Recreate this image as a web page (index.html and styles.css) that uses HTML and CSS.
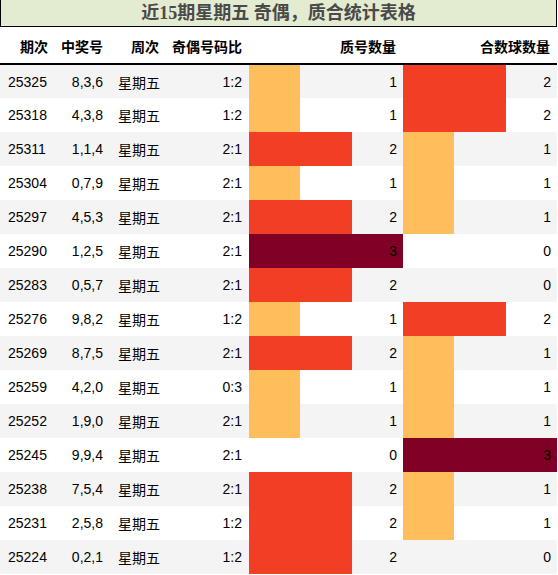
FILE: index.html
```html
<!DOCTYPE html>
<html lang="zh">
<head>
<meta charset="utf-8">
<link rel="stylesheet" href="styles.css">
</head>
<body>
<div class="wrap">
  <div class="title">近15期星期五 奇偶，质合统计表格</div>
  <table class="tbl">
    <colgroup>
      <col class="c1"><col class="c2"><col class="c3"><col class="c4"><col class="c5"><col class="c6">
    </colgroup>
    <thead>
      <tr><th>期次</th><th>中奖号</th><th>周次</th><th>奇偶号码比</th><th>质号数量</th><th>合数球数量</th></tr>
    </thead>
    <tbody>
      <tr><td class="l">25325</td><td>8,3,6</td><td class="l">星期五</td><td>1:2</td><td class="b v1">1</td><td class="b v2">2</td></tr>
      <tr><td class="l">25318</td><td>4,3,8</td><td class="l">星期五</td><td>1:2</td><td class="b v1">1</td><td class="b v2">2</td></tr>
      <tr><td class="l">25311</td><td>1,1,4</td><td class="l">星期五</td><td>2:1</td><td class="b v2">2</td><td class="b v1">1</td></tr>
      <tr><td class="l">25304</td><td>0,7,9</td><td class="l">星期五</td><td>2:1</td><td class="b v1">1</td><td class="b v1">1</td></tr>
      <tr><td class="l">25297</td><td>4,5,3</td><td class="l">星期五</td><td>2:1</td><td class="b v2">2</td><td class="b v1">1</td></tr>
      <tr><td class="l">25290</td><td>1,2,5</td><td class="l">星期五</td><td>2:1</td><td class="b v3">3</td><td class="b v0">0</td></tr>
      <tr><td class="l">25283</td><td>0,5,7</td><td class="l">星期五</td><td>2:1</td><td class="b v2">2</td><td class="b v0">0</td></tr>
      <tr><td class="l">25276</td><td>9,8,2</td><td class="l">星期五</td><td>1:2</td><td class="b v1">1</td><td class="b v2">2</td></tr>
      <tr><td class="l">25269</td><td>8,7,5</td><td class="l">星期五</td><td>2:1</td><td class="b v2">2</td><td class="b v1">1</td></tr>
      <tr><td class="l">25259</td><td>4,2,0</td><td class="l">星期五</td><td>0:3</td><td class="b v1">1</td><td class="b v1">1</td></tr>
      <tr><td class="l">25252</td><td>1,9,0</td><td class="l">星期五</td><td>2:1</td><td class="b v1">1</td><td class="b v1">1</td></tr>
      <tr><td class="l">25245</td><td>9,9,4</td><td class="l">星期五</td><td>2:1</td><td class="b v0">0</td><td class="b v3">3</td></tr>
      <tr><td class="l">25238</td><td>7,5,4</td><td class="l">星期五</td><td>2:1</td><td class="b v2">2</td><td class="b v1">1</td></tr>
      <tr><td class="l">25231</td><td>2,5,8</td><td class="l">星期五</td><td>1:2</td><td class="b v2">2</td><td class="b v1">1</td></tr>
      <tr><td class="l">25224</td><td>0,2,1</td><td class="l">星期五</td><td>1:2</td><td class="b v2">2</td><td class="b v0">0</td></tr>
    </tbody>
  </table>
</div>
</body>
</html>
```

FILE: styles.css
```css
html, body {
  margin: 0;
  padding: 0;
  background: #ffffff;
}
.wrap {
  width: 557px;
}
.title {
  box-sizing: border-box;
  height: 27px;
  background: #e3ebd0;
  border: 1px solid #000;
  border-top: none;
  font-family: "Liberation Serif", "Noto Sans CJK SC", serif;
  font-weight: bold;
  font-size: 18px;
  line-height: 26px;
  color: #4a4a4a;
  text-align: center;
}
.tbl {
  width: 557px;
  border-collapse: collapse;
  table-layout: fixed;
  font-family: "Liberation Sans", "Noto Sans CJK SC", sans-serif;
  font-size: 14px;
  color: #000;
}
.c1 { width: 55px; }
.c2 { width: 55px; }
.c3 { width: 56px; }
.c4 { width: 83px; }
.c5 { width: 154px; }
.c6 { width: 154px; }
.tbl th {
  height: 37px;
  padding: 1px 7px 0 0;
  text-align: right;
  font-weight: bold;
  border-bottom: 2px solid #000;
  box-sizing: border-box;
  white-space: nowrap;
}
.tbl td {
  height: 34px;
  padding: 0 7px 0 8px;
  text-align: right;
  white-space: nowrap;
  box-sizing: border-box;
}
.tbl td.l {
  text-align: left;
}
.tbl tbody tr:nth-child(odd) {
  background: #f4f4f4;
}
.tbl tbody tr:nth-child(even) {
  background: #ffffff;
}
.tbl td.b {
  padding-right: 6px;
}
.tbl td.v1 {
  background: linear-gradient(90deg, #febe5b 33.333%, transparent 33.333%);
}
.tbl td.v2 {
  background: linear-gradient(90deg, #f33e26 66.667%, transparent 66.667%);
}
.tbl td.v3 {
  background: #800026;
}
```
